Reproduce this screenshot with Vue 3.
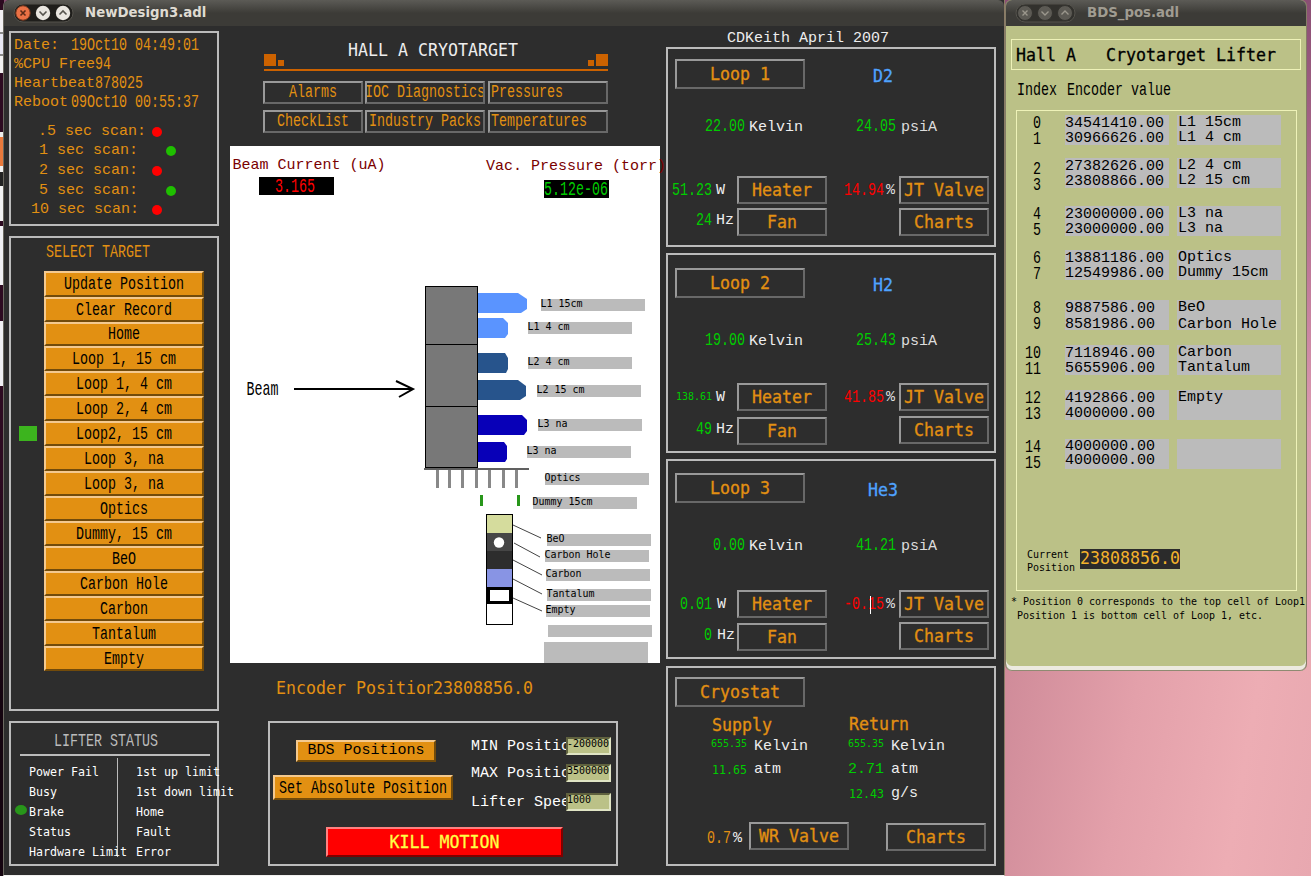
<script setup>
import { ref } from 'vue'

const stats = [
  { label: 'Date:', value: '19Oct10 04:49:01', short: true },
  { label: '%CPU Free', value: '94' },
  { label: 'Heartbeat', value: '878025' },
  { label: 'Reboot', value: '09Oct10 00:55:37', short: true },
]

const scans = [
  { label: '.5 sec scan:', ok: false, cls: 'half' },
  { label: '1 sec scan:', ok: true },
  { label: '2 sec scan:', ok: false },
  { label: '5 sec scan:', ok: true },
  { label: '10 sec scan:', ok: false, cls: 'ten' },
]

const targets = [
  'Update Position', 'Clear Record', 'Home', 'Loop 1, 15 cm', 'Loop 1, 4 cm',
  'Loop 2, 4 cm', 'Loop2, 15 cm', 'Loop 3, na', 'Loop 3, na', 'Optics',
  'Dummy, 15 cm', 'BeO', 'Carbon Hole', 'Carbon', 'Tantalum', 'Empty',
]
const current = ref(6)

const lifterLeft = ['Power Fail', 'Busy', 'Brake', 'Status', 'Hardware Limit']
const lifterRight = ['1st up limit', '1st down limit', 'Home', 'Fault', 'Error']

const links = ['Alarms', 'IOC Diagnostics', 'Pressures', 'CheckList', 'Industry Packs', 'Temperatures']

const loops = [
  { name: 'Loop 1', gas: 'D2', temp: '22.00', psi: '24.05', watts: '51.23', hz: '24', jt: '14.94' },
  { name: 'Loop 2', gas: 'H2', temp: '19.00', psi: '25.43', watts: '138.61', hz: '49', jt: '41.85' },
  { name: 'Loop 3', gas: 'He3', temp: '0.00', psi: '41.21', watts: '0.01', hz: '0', jt: '-0.15' },
]

const limits = [
  { label: 'MIN Position', value: '-200000' },
  { label: 'MAX Position', value: '3500000' },
  { label: 'Lifter Speed', value: '1000' },
]

// labels on the beam drawing: box x, box y, baseline
const tags = [
  { x: 541, y: 299, b: 307, t: 'L1 15cm' },
  { x: 528, y: 322, b: 330, t: 'L1 4 cm' },
  { x: 528, y: 357, b: 365, t: 'L2 4 cm' },
  { x: 537, y: 385, b: 393, t: 'L2 15 cm' },
  { x: 538, y: 419, b: 427, t: 'L3 na' },
  { x: 527, y: 446, b: 454, t: 'L3 na' },
  { x: 545, y: 473, b: 481, t: 'Optics' },
  { x: 533, y: 497, b: 505, t: 'Dummy 15cm' },
  { x: 547, y: 534, b: 542, t: 'BeO' },
  { x: 545, y: 550, b: 558, t: 'Carbon Hole' },
  { x: 546, y: 569, b: 577, t: 'Carbon' },
  { x: 547, y: 589, b: 597, t: 'Tantalum' },
  { x: 546, y: 605, b: 613, t: 'Empty' },
  { x: 548, y: 625, b: 633, t: '' },
]
const teeth = [436, 448, 461, 475, 488, 502, 515]

const bdsTitle = 'Hall A   Cryotarget Lifter'
const groups = [
  { idx: [0, 1], val: ['34541410.00', '30966626.00'], name: ['L1 15cm', 'L1 4 cm'] },
  { idx: [2, 3], val: ['27382626.00', '23808866.00'], name: ['L2 4 cm', 'L2 15 cm'] },
  { idx: [4, 5], val: ['23000000.00', '23000000.00'], name: ['L3 na', 'L3 na'] },
  { idx: [6, 7], val: ['13881186.00', '12549986.00'], name: ['Optics', 'Dummy 15cm'] },
  { idx: [8, 9], val: ['9887586.00', '8581986.00'], name: ['BeO', 'Carbon Hole'], loose: true },
  { idx: [10, 11], val: ['7118946.00', '5655906.00'], name: ['Carbon', 'Tantalum'] },
  { idx: [12, 13], val: ['4192866.00', '4000000.00'], name: ['Empty', ''] },
  { idx: [14, 15], val: ['4000000.00', '4000000.00'], name: ['', ''] },
]
</script>

<template>
<div class="desktop">
  <div class="strip"></div>

  <div class="window main">
    <div class="titlebar">
      <svg class="wm" width="62" height="20" viewBox="0 0 62 20">
        <rect x="1" y="1" width="59" height="18" rx="9" fill="#1f1e1b" stroke="#55534d" />
        <circle cx="10" cy="10" r="7.2" fill="#ea7145" stroke="#7b3a20" />
        <path d="M7.500 7.500l5 5m0-5l-5 5" stroke="#5b2a18" stroke-width="1.600" />
        <circle cx="30" cy="10" r="7.200" fill="#e9e6e0" />
        <path d="M26.500 8.500l3.500 3.500 3.500-3.500" stroke="#55534d" stroke-width="1.600" fill="none" />
        <circle cx="50" cy="10" r="7.200" fill="#e9e6e0" />
        <path d="M46.500 11.500l3.500-3.500 3.500 3.500" stroke="#55534d" stroke-width="1.600" fill="none" />
      </svg>
      <span class="title">NewDesign3.adl</span>
    </div>

    <div class="body">
      <div class="col left">
        <section class="panel stats">
          <div v-for="s in stats" :key="s.label" class="stat">
            <span class="wide" :class="{ short: s.short }">{{ s.label }}</span>
            <span class="tall">{{ s.value }}</span>
          </div>
          <div class="scans">
            <div v-for="s in scans" :key="s.label" class="scan">
              <span class="wide scan-label" :class="s.cls">{{ s.label }}</span>
              <i class="dot" :class="{ ok: s.ok }"></i>
            </div>
          </div>
        </section>

        <section class="panel select">
          <div class="select-title"><span class="tall">SELECT TARGET</span></div>
          <div v-for="(t, i) in targets" :key="i" class="target">
            <i class="led" :class="{ on: i === current }"></i>
            <button class="btn gold" @click="current = i"><span class="tall">{{ t }}</span></button>
          </div>
        </section>

        <section class="panel lifter">
          <div class="lifter-title"><span class="tall">LIFTER STATUS</span></div>
          <div class="lifter-cols">
            <ul>
              <li v-for="l in lifterLeft" :key="l">
                <i class="brake" :class="{ on: l === 'Brake' }"></i><span class="mid">{{ l }}</span>
              </li>
            </ul>
            <ul>
              <li v-for="l in lifterRight" :key="l"><span class="mid">{{ l }}</span></li>
            </ul>
          </div>
        </section>
      </div>

      <div class="col center">
        <header class="head">
          <div class="head-row">
            <i class="sq"></i><i class="sq small"></i>
            <span class="big head-title">HALL A CRYOTARGET</span>
            <i class="sq small"></i><i class="sq"></i>
          </div>
        </header>
        <nav class="links">
          <button v-for="l in links" :key="l" class="btn dark"><span class="tall">{{ l }}</span></button>
        </nav>

        <svg class="beam" width="430" height="517" viewBox="230 146 430 517">
          <rect x="230" y="146" width="430" height="517" fill="#fff" />
          <g class="s9" fill="#7a0000">
            <text x="232.500" y="169">Beam Current (uA)</text>
            <text x="486" y="170">Vac. Pressure (torr)</text>
          </g>
          <rect x="259" y="177" width="75" height="18" />
          <text class="s8" fill="#f00" transform="translate(275 191.500) scale(1 1.450)">3.165</text>
          <rect x="544" y="180" width="65" height="18" />
          <text class="s8" fill="#0c0" transform="translate(544 194.500) scale(1 1.450)">5.12e-06</text>

          <text class="s8" transform="translate(246.500 394.500) scale(1 1.450)">Beam</text>
          <g stroke="#000" stroke-width="2" fill="none">
            <path d="M294 389H413" />
            <path d="M396 381L413 389L399 397" />
          </g>

          <g fill="#787878" stroke="#000">
            <rect x="425.500" y="286.500" width="52" height="58" />
            <rect x="425.500" y="344.500" width="52" height="62" />
            <rect x="425.500" y="406.500" width="52" height="61" />
          </g>
          <g fill="#5a94ff">
            <path d="M478 293H518L527 299V309L521 313H478Z" />
            <path d="M478 318H503L508 323V334L505 338H478Z" />
          </g>
          <g fill="#27548c">
            <path d="M478 353H505L508 358V369L506 373H478Z" />
            <path d="M478 380H518L526 386V396L520 400H478Z" />
          </g>
          <g fill="#0800b8">
            <path d="M478 415H522L527 420V431L524 435H478Z" />
            <path d="M478 442H504L507 446V459L505 462H478Z" />
          </g>
          <rect x="424" y="468" width="105" height="2" fill="#606060" />
          <rect v-for="x in teeth" :key="x" :x="x" y="470" width="3" height="18" fill="#888" />
          <g fill="#28961a">
            <rect x="480" y="495" width="3" height="11" />
            <rect x="517" y="495" width="3" height="11" />
          </g>

          <rect x="486.500" y="514.500" width="26" height="110" fill="#fff" stroke="#000" />
          <rect x="487" y="515" width="25" height="18" fill="#d5dc9d" />
          <rect x="487" y="533" width="25" height="18" fill="#464646" />
          <circle cx="499" cy="542.500" r="5.200" fill="#fff" />
          <rect x="487" y="551" width="25" height="18" fill="#2d2d2d" />
          <rect x="487" y="569" width="25" height="18" fill="#8894e4" />
          <rect x="486" y="587" width="27" height="17" />
          <rect x="490" y="590" width="19" height="11" fill="#fff" />
          <g stroke="#444">
            <path d="M513 525L541 538M514 543L540 557M513 560L542 575M513 579L542 594M513 598L542 611" />
          </g>

          <g v-for="(t, i) in tags" :key="i">
            <rect :x="t.x" :y="t.y" width="104" height="12" fill="#bbb" />
            <text class="s6" :x="t.x - 0.5" :y="t.b">{{ t.t }}</text>
          </g>
          <rect x="544" y="642" width="104" height="21" fill="#bbb" />
        </svg>

        <div class="encoder">
          <span class="big enc-label">Encoder Position</span><span class="big">23808856.0</span>
        </div>

        <section class="panel motion">
          <div class="motion-top">
            <div class="motion-btns">
              <button class="btn gold bds"><span class="wide">BDS Positions</span></button>
              <button class="btn gold abs"><span class="tall">Set Absolute Position</span></button>
            </div>
            <div class="limits">
              <div v-for="l in limits" :key="l.label" class="limit">
                <span class="wide limit-label">{{ l.label }}</span>
                <div class="field"><span class="tiny">{{ l.value }}</span></div>
              </div>
            </div>
          </div>
          <button class="btn kill"><span class="big bold">KILL MOTION</span></button>
        </section>
      </div>

      <div class="col right">
        <div class="author"><span class="wide">CDKeith April 2007</span></div>
        <section v-for="(l, i) in loops" :key="l.name" class="panel loop" :class="'loop-' + (i + 1)">
          <div class="loop-head">
            <button class="btn dark wide-btn"><span class="big bold">{{ l.name }}</span></button>
            <div class="gas"><span class="big bold">{{ l.gas }}</span></div>
          </div>
          <div class="readings">
            <span class="tall num">{{ l.temp }}</span><span class="wide unit">Kelvin</span>
            <span class="tall num">{{ l.psi }}</span><span class="wide unit psi">psiA</span>
          </div>
          <div class="controls">
            <span class="num" :class="l.watts.length > 5 ? 'tiny' : 'tall'">{{ l.watts }}</span>
            <span class="wide unit">W</span>
            <button class="btn dark"><span class="big bold">Heater</span></button>
            <span class="num jt"><span class="tall red">{{ l.jt }}</span><i v-if="i === 2" class="caret"></i></span>
            <span class="wide pct">%</span>
            <button class="btn dark"><span class="big bold">JT Valve</span></button>

            <span class="tall num hz">{{ l.hz }}</span>
            <span class="wide unit hz">Hz</span>
            <button class="btn dark"><span class="big bold">Fan</span></button>
            <button class="btn dark charts"><span class="big bold">Charts</span></button>
          </div>
        </section>

        <section class="panel cryostat">
          <button class="btn dark wide-btn"><span class="big bold">Cryostat</span></button>
          <div class="cryo-cols">
            <div class="cryo">
              <div class="cryo-title"><span class="big bold">Supply</span></div>
              <div class="cryo-row first"><span class="tiny">655.35</span><span class="wide">Kelvin</span></div>
              <div class="cryo-row"><span class="mid num2">11.65</span><span class="wide">atm</span></div>
            </div>
            <div class="cryo">
              <div class="cryo-title up"><span class="big bold">Return</span></div>
              <div class="cryo-row first"><span class="tiny">655.35</span><span class="wide">Kelvin</span></div>
              <div class="cryo-row"><span class="wide">2.71</span><span class="wide">atm</span></div>
              <div class="cryo-row"><span class="mid num2">12.43</span><span class="wide">g/s</span></div>
            </div>
          </div>
          <div class="cryo-foot">
            <span class="tall gold-text">0.7</span><span class="wide">%</span>
            <button class="btn dark"><span class="big bold">WR Valve</span></button>
            <button class="btn dark last"><span class="big bold">Charts</span></button>
          </div>
        </section>
      </div>
    </div>
  </div>

  <div class="window bds-win">
    <div class="titlebar">
      <svg class="wm" width="62" height="20" viewBox="0 0 62 20">
        <rect x="1" y="1" width="59" height="18" rx="9" fill="#32312d" stroke="#55534d" />
        <g fill="#5c5a54" stroke="#34332f">
          <circle cx="10" cy="10" r="7.500" />
          <circle cx="30" cy="10" r="7.500" />
          <circle cx="50" cy="10" r="7.500" />
        </g>
        <g stroke="#9b978d" stroke-width="1.400" fill="none">
          <path d="M7.500 7.500l5 5m0-5l-5 5" />
          <path d="M26.500 8.500l3.500 3.500 3.500-3.500" />
          <path d="M46.500 11.500l3.500-3.500 3.500 3.500" />
        </g>
      </svg>
      <span class="title">BDS_pos.adl</span>
    </div>
    <div class="bds-body">
      <div class="bds-head"><span class="big bold">{{ bdsTitle }}</span></div>
      <div class="bds-cols"><span class="tall">Index</span><span class="tall">Encoder value</span></div>
      <div class="bds-table">
        <div class="groups">
          <div v-for="(g, i) in groups" :key="i" class="group" :class="{ loose: g.loose }">
            <div class="idx"><span v-for="n in g.idx" :key="n" class="tall">{{ n }}</span></div>
            <div class="cells"><span v-for="(v, k) in g.val" :key="k" class="wide">{{ v }}</span></div>
            <div class="cells names"><span v-for="(v, k) in g.name" :key="k" class="wide">{{ v }}</span></div>
          </div>
        </div>
        <div class="curpos">
          <div class="cur-label"><span class="tiny">Current</span><span class="tiny">Position</span></div>
          <div class="cur-value"><span class="big">23808856.0</span></div>
        </div>
      </div>
      <div class="notes">
        <span class="tiny">* Position 0 corresponds to the top cell of Loop1</span>
        <span class="tiny second">Position 1 is bottom cell of Loop 1, etc.</span>
      </div>
    </div>
  </div>
</div>
</template>

<style>
body {
  margin: 0;
  overflow: hidden;
}
</style>

<style scoped>
* {
  box-sizing: border-box;
}

.desktop {
  position: relative;
  width: 1311px;
  height: 876px;
  overflow: hidden;
  background:
    linear-gradient(100deg, #cf8b99 0%, #e3a0aa 40%, #edadb4 75%, #e8a8b0 100%) 1004px 660px / 307px 216px no-repeat,
    linear-gradient(#8a4f74 0, #bb7496 250px, #dd9bb2 430px, #e8a8b6 660px);
}

.strip {
  width: 4px;
  height: 876px;
  background: linear-gradient(
    #2c0a20 0 10px, #f2f0f2 10px 32px, #888 32px 34px, #e8e8f4 34px 54px, #888 54px 56px, #f2f2f2 56px 73px,
    #2c0a20 73px 132px, #eee 132px 137px, #e9793c 137px 166px, #f2f2f2 166px 172px, #222 172px 186px,
    #f2f2f2 186px 221px, #2c0a20 221px 226px, #f0f0f4 226px 285px, #2c0a20 285px 321px, #f0f0f4 321px 386px,
    #2c0a20 386px 480px, #14040f 700px
  );
}

/* text sizes, named after the cell width of each face */
.tall, .wide, .big, .mid, .tiny {
  display: block;
  white-space: pre;
  flex: none;
  line-height: 18px;
}
.tall {
  font-family: "Liberation Mono", monospace;
  font-size: 13.333px;
  transform: translateY(0.6px) scaleY(1.42);
}
.wide {
  font-family: "Liberation Mono", monospace;
  font-size: 15px;
  transform: translateY(1px);
}
.big {
  font-family: "DejaVu Sans Mono", monospace;
  font-size: 16.61px;
  transform: translateY(1px) scaleY(1.04);
}
.mid {
  font-family: "DejaVu Sans Mono", monospace;
  font-size: 11.63px;
  transform: translateY(0.5px) scaleY(1.1);
}
.tiny {
  font-family: "DejaVu Sans Mono", monospace;
  font-size: 9.97px;
}
.bold {
  -webkit-text-stroke: 0.3px currentColor;
}

.window {
  position: absolute;
  top: 0;
}
.main {
  left: 3px;
  width: 1002px;
  height: 876px;
  background: #2d2d2d;
  border-left: 1px solid #6b6960;
  border-right: 1px solid #8b7b66;
  border-bottom: 1px solid #f2f1f0;
  border-top-left-radius: 6px;
}
.titlebar {
  display: flex;
  align-items: center;
  height: 26px;
  background: linear-gradient(#5c5b56, #3c3b37 50%);
  border-radius: 6px 6px 0 0;
}
.wm {
  margin-left: 9px;
}
.title {
  margin-left: 10px;
  font: bold 13.3px/26px "DejaVu Sans", sans-serif;
  color: #dfdbd2;
}

.body {
  display: flex;
  padding-left: 5px;
}
.left {
  width: 210px;
  padding-top: 5px;
  color: #e29012;
}
.center {
  width: 430px;
  margin-left: 11px;
}
.right {
  width: 330px;
  margin-left: 6px;
  color: #eee;
}

.panel {
  border: 2px solid #bbb;
}

.btn {
  display: flex;
  align-items: center;
  justify-content: center;
  padding: 0;
  border: 2px solid;
  border-radius: 0;
  overflow: hidden;
  cursor: pointer;
}
.gold {
  background: #e29012;
  color: #000;
  border-color: #f4c98f #724b0b #724b0b #f4c98f;
}
.dark {
  background: #2d2d2d;
  color: #e29012;
  border-color: #999 #686868 #686868 #999;
}

/* status block */
.stats {
  height: 195px;
  padding: 2px 0 0 3px;
}
.stat {
  display: flex;
  align-items: center;
  height: 19.25px;
}
.stat .short {
  width: 57px;
}
.scans {
  margin-top: 9px;
}
.scan {
  display: flex;
  align-items: center;
  height: 19.6px;
}
.scan-label {
  width: 138px;
  padding-left: 25px;
}
.scan-label.half {
  padding-left: 24px;
}
.scan-label.ten {
  padding-left: 17px;
}
.dot {
  width: 10px;
  height: 10px;
  margin-top: 2px;
  border-radius: 50%;
  background: #f00;
}
.dot.ok {
  margin-left: 14px;
  background: #1fbf00;
}

.select {
  height: 475px;
  margin-top: 10px;
}
.select-title {
  height: 33px;
  padding: 5px 0 0 35px;
}
.target {
  display: flex;
  align-items: center;
  height: 25px;
  padding-left: 8px;
}
.target:nth-child(2) {
  height: 26px;
}
.target:nth-child(4) {
  height: 24px;
}
.led {
  width: 18px;
  height: 15px;
  margin-right: 7px;
}
.led.on {
  background: #3cb41e;
}
.target .btn {
  width: 160px;
  height: 100%;
}

.lifter {
  height: 145px;
  margin-top: 10px;
  color: #fff;
}
.lifter-title {
  height: 33px;
  margin: 0 7px 0 9px;
  padding: 9px 0 0 34px;
  border-bottom: 2px solid #bbb;
  color: #bbb;
}
.lifter-cols {
  display: flex;
  margin-top: 2px;
}
.lifter-cols ul {
  list-style: none;
  height: 99px;
  margin: 0;
  padding: 3px 0 0 4px;
  width: 107px;
  border-right: 1px solid #bbb;
}
.lifter-cols ul + ul {
  border: 0;
  width: 98px;
  padding-left: 18px;
}
.lifter-cols li {
  display: flex;
  align-items: center;
  height: 20px;
}
.brake {
  flex: none;
  width: 12px;
  height: 10px;
  margin: -3px 2px 0 0;
  border-radius: 50%;
}
.brake.on {
  background: #28961a;
}

/* centre column */
.head {
  height: 45px;
  margin: 0 52px 0 34px;
  border-bottom: 2px solid #cc6200;
}
.head-row {
  display: flex;
  align-items: flex-end;
  gap: 2px;
  height: 40px;
}
.sq {
  width: 12px;
  height: 12px;
  background: #cc6200;
}
.sq.small {
  width: 6px;
  height: 6px;
}
.head-title {
  margin: 0 auto 7px 62px;
  color: #eee;
}
.links {
  display: grid;
  grid-template-columns: 100px 120px 120px;
  column-gap: 2px;
  row-gap: 6px;
  height: 52px;
  margin: 10px 0 13px 33px;
}
.links .btn .tall {
  margin-top: -1px;
}
.links .btn:nth-child(3n) {
  justify-content: flex-start;
  margin-left: 1px;
  padding-left: 1px;
  width: 120px;
}
.beam {
  display: block;
  overflow: visible;
}
.s9 {
  font: 15px "Liberation Mono", monospace;
}
.s8 {
  font: 13.333px "Liberation Mono", monospace;
}
.s6 {
  font: 9.97px "DejaVu Sans Mono", monospace;
}
.encoder {
  display: flex;
  margin: 16px 0 0 46px;
  color: #e29012;
}
.enc-label {
  width: 157px;
  overflow: hidden;
}
.motion {
  width: 350px;
  height: 145px;
  margin: 24px 0 0 38px;
  color: #fff;
}
.motion-top {
  display: flex;
  height: 104px;
}
.motion-btns {
  width: 201px;
}
.bds {
  width: 140px;
  height: 22px;
  margin: 17px 0 0 26px;
}
.bds .wide {
  margin-top: -2px;
}
.abs {
  width: 180px;
  height: 25px;
  margin: 13px 0 0 3px;
}
.limits {
  display: flex;
  flex-direction: column;
  gap: 9px;
  padding-top: 14px;
}
.limit {
  display: flex;
}
.limit + .limit + .limit {
  margin-top: 2px;
}
.limit-label {
  width: 95px;
  overflow: hidden;
}
.field {
  width: 45px;
  height: 18px;
  background: #bbc187;
  border: 2px solid;
  border-color: #60623f #e0e4c4 #e0e4c4 #60623f;
  color: #000;
}
.field .tiny {
  line-height: 9px;
  margin-left: -1px;
}
.kill {
  width: 237px;
  height: 30px;
  margin-left: 56px;
  background: #f00;
  color: #ff4;
  border-color: #ff8080 #800000 #800000 #ff8080;
}

/* loops */
.author {
  height: 21px;
  padding: 3px 0 0 61px;
}
.loop {
  height: 200px;
  margin-bottom: 6px;
}
.loop-3 {
  margin-bottom: 7px;
}
.loop-1 .loop-head { margin-top: 10px; }
.loop-2 .loop-head { margin-top: 13px; }
.loop-3 .loop-head { margin-top: 12px; }
.loop-1 .readings { margin-top: 29px; }
.loop-2 .readings, .loop-3 .readings { margin-top: 34px; }
.loop-1 .controls { margin-top: 40px; row-gap: 4px; }
.loop-2 .controls { margin-top: 33px; row-gap: 6px; }
.loop-3 .controls { margin-top: 35px; row-gap: 5px; }
.loop-2 .charts, .loop-3 .charts { margin-top: -2px; }
.loop-head {
  display: flex;
  padding-left: 7px;
}
.wide-btn {
  width: 130px;
  height: 30px;
}
.gas {
  width: 156px;
  padding-top: 8px;
  display: flex;
  justify-content: center;
  color: #4fa3ff;
}
.readings {
  display: grid;
  grid-template-columns: 77px 75px 76px 1fr;
  height: 18px;
}
.readings .num {
  margin-top: -1px;
}
.num {
  justify-self: end;
  color: #0c0;
}
.unit {
  padding-left: 4px;
}
.psi {
  padding-left: 5px;
  color: #ddd;
}
.controls {
  display: grid;
  grid-template-columns: 44px 25px 90px 57px 15px 90px;
  grid-auto-rows: 28px;
  align-items: center;
}
.controls .btn {
  height: 28px;
}
.controls .hz {
  margin-top: -4px;
}
.loop-3 .controls .unit {
  padding-left: 5px;
}
.charts {
  grid-column: 6;
}
.jt {
  position: relative;
}
.red {
  color: #f00;
}
.caret {
  position: absolute;
  left: 26px;
  top: 1px;
  width: 1px;
  height: 18px;
  background: #fff;
}
.pct {
  padding-left: 2px;
  color: #ddd;
}

.cryostat {
  height: 200px;
  padding: 9px 0 0 7px;
}
.cryo-cols {
  display: flex;
  height: 115px;
  padding: 9px 0 0 36px;
}
.cryo {
  width: 137px;
}
.cryo-title {
  padding-left: 1px;
  color: #e29012;
}
.cryo-title.up {
  margin-top: -1px;
  padding-bottom: 1px;
}
.cryo-row {
  display: grid;
  grid-template-columns: 43px 1fr;
  height: 23.5px;
  align-items: center;
}
.cryo-row > :first-child {
  color: #0c0;
}
.cryo-row .tiny {
  margin-top: -3px;
}
.num2 {
  padding-left: 1px;
}
.cryo-foot {
  display: flex;
  align-items: center;
  height: 28px;
  padding-left: 32px;
}
.cryo-foot .gold-text {
  width: 26px;
  margin-top: 3px;
  color: #e29012;
}
.cryo-foot .wide {
  width: 16px;
  margin-top: 3px;
}
.cryo-foot .btn {
  width: 100px;
  height: 28px;
}
.cryo-foot .last {
  margin: 2px 0 0 37px;
}

/* lifter positions window */
.bds-win {
  left: 1005px;
  width: 302px;
  height: 671px;
  background: #bbc187;
  border: 1px solid #857c66;
  border-top: 0;
  border-bottom: 0;
  border-radius: 6px 6px 7px 7px;
  box-shadow: inset 0 -1px #8f8a72, inset 0 -5px #eceae0;
}
.bds-win .title {
  color: #a09c91;
}
.bds-body {
  padding: 13px 5px 0;
  color: #000;
}
.bds-head {
  height: 31px;
  padding: 6px 0 0 4px;
  border: 1px solid #eef2b8;
}
.bds-cols {
  display: flex;
  gap: 10px;
  height: 40px;
  padding: 13px 0 0 6px;
}
.bds-table {
  height: 481px;
  width: 281px;
  margin-left: 5px;
  border: 1px solid #eef2b8;
}
.groups {
  display: grid;
  grid-template-rows: 43px 48px 44px 50px 45px 45px 49px 30px;
  padding-top: 4px;
  height: 438px;
}
.group {
  display: grid;
  grid-template-columns: 40px 104px 104px;
  column-gap: 8px;
}
.idx {
  display: flex;
  flex-direction: column;
  align-items: flex-end;
  padding-right: 16px;
}
.idx .tall {
  line-height: 16px;
}
.group:nth-child(2) .idx {
  padding-top: 3px;
}
.cells {
  height: 30px;
  padding-left: 1px;
  background: #bbb;
}
.cells .wide {
  height: 15px;
  line-height: 15px;
  margin-left: -1px;
}
.names {
  padding-left: 2px;
}
.names .wide {
  transform: none;
}
.loose .wide + .wide {
  margin-top: 1px;
}
.loose .names .wide + .wide {
  margin-top: 2px;
}
.group:last-child .cells .wide {
  line-height: 14px;
  height: 14px;
}
.curpos {
  display: flex;
  padding-left: 10px;
}
.cur-label {
  width: 53px;
}
.cur-label .tiny {
  line-height: 13px;
  margin-top: -1px;
}
.cur-label .tiny + .tiny {
  margin-top: 0;
}
.cur-value {
  width: 100px;
  height: 20px;
  background: #2b2b2b;
  color: #f4b32c;
}
.notes {
  padding-top: 4px;
}
.notes .tiny {
  line-height: 14px;
}
.notes .second {
  padding-left: 6px;
}
</style>
